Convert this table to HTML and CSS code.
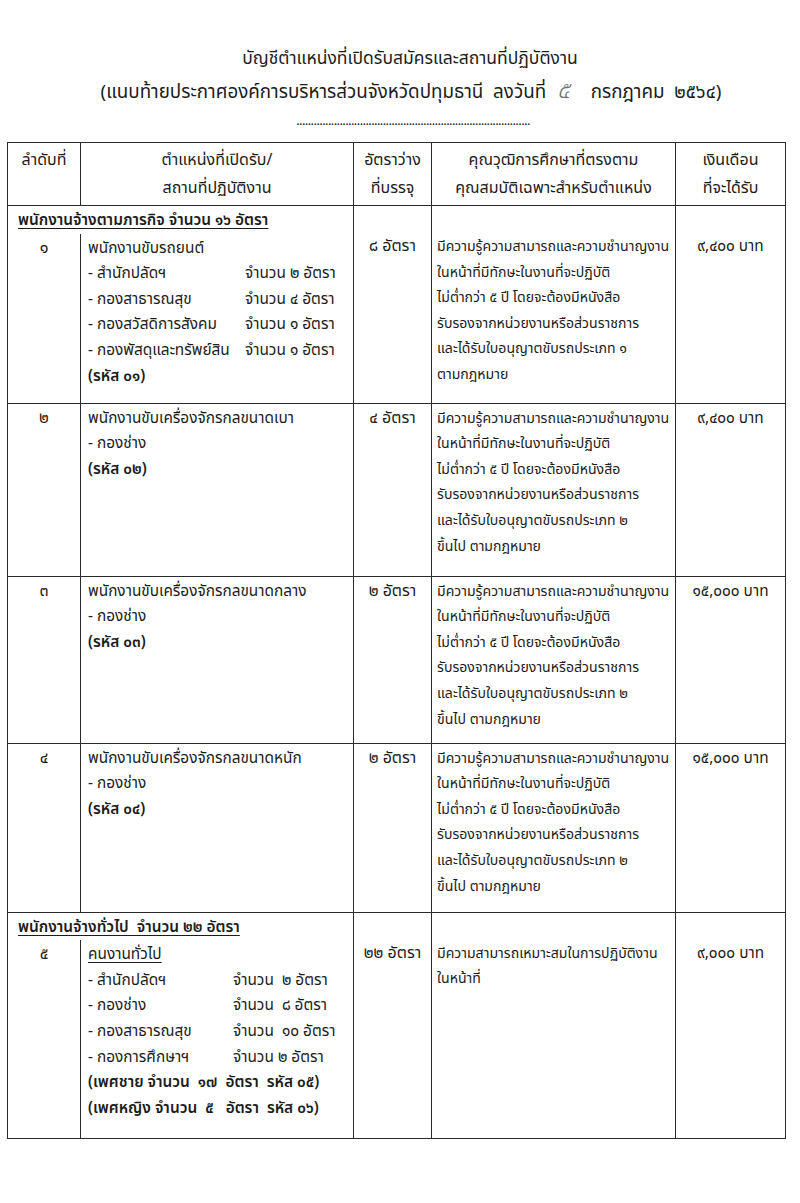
FILE: index.html
```html
<!DOCTYPE html>
<html lang="th">
<head>
<meta charset="utf-8">
<title>บัญชีตำแหน่งที่เปิดรับสมัคร</title>
<link rel="stylesheet" href="styles.css">
</head>
<body>
<div class="page">
  <div class="title">บัญชีตำแหน่งที่เปิดรับสมัครและสถานที่ปฏิบัติงาน</div>
  <div class="subtitle">(แนบท้ายประกาศองค์การบริหารส่วนจังหวัดปทุมธานี&nbsp; ลงวันที่ <span class="hand">๕</span>&nbsp;&nbsp; กรกฎาคม&nbsp; ๒๕๖๔)</div>
  <div class="dots">.................................................................................</div>

  <table class="tbl">
    <colgroup>
      <col class="w1"><col class="w2"><col class="w3"><col class="w4"><col class="w5">
    </colgroup>
    <tr class="head">
      <td class="ctr">ลำดับที่</td>
      <td class="ctr">ตำแหน่งที่เปิดรับ/<br>สถานที่ปฏิบัติงาน</td>
      <td class="ctr">อัตราว่าง<br>ที่บรรจุ</td>
      <td class="ctr">คุณวุฒิการศึกษาที่ตรงตาม<br>คุณสมบัติเฉพาะสำหรับตำแหน่ง</td>
      <td class="ctr">เงินเดือน<br>ที่จะได้รับ</td>
    </tr>

    <tr class="sec">
      <td colspan="2" class="sechead"><span class="ul">พนักงานจ้างตามภารกิจ จำนวน ๑๖ อัตรา</span></td>
      <td rowspan="2" class="ctr shift">๘ อัตรา</td>
      <td rowspan="2" class="qual shift">มีความรู้ความสามารถและความชำนาญงาน<br>ในหน้าที่มีทักษะในงานที่จะปฏิบัติ<br>ไม่ต่ำกว่า ๕ ปี โดยจะต้องมีหนังสือ<br>รับรองจากหน่วยงานหรือส่วนราชการ<br>และได้รับใบอนุญาตขับรถประเภท ๑<br>ตามกฎหมาย</td>
      <td rowspan="2" class="ctr shift sal">๙,๔๐๐ บาท</td>
    </tr>
    <tr class="r1">
      <td class="ctr nt">๑</td>
      <td class="pos nt">
        <div>พนักงานขับรถยนต์</div>
        <div class="items a">
          <span>- สำนักปลัดฯ</span><span>จำนวน ๒ อัตรา</span>
          <span>- กองสาธารณสุข</span><span>จำนวน ๔ อัตรา</span>
          <span>- กองสวัสดิการสังคม</span><span>จำนวน ๑ อัตรา</span>
          <span>- กองพัสดุและทรัพย์สิน</span><span>จำนวน ๑ อัตรา</span>
        </div>
        <div class="b">(รหัส ๐๑)</div>
      </td>
    </tr>

    <tr class="r2">
      <td class="ctr">๒</td>
      <td class="pos">
        <div>พนักงานขับเครื่องจักรกลขนาดเบา</div>
        <div>- กองช่าง</div>
        <div class="b">(รหัส ๐๒)</div>
      </td>
      <td class="ctr">๔ อัตรา</td>
      <td class="qual">มีความรู้ความสามารถและความชำนาญงาน<br>ในหน้าที่มีทักษะในงานที่จะปฏิบัติ<br>ไม่ต่ำกว่า ๕ ปี โดยจะต้องมีหนังสือ<br>รับรองจากหน่วยงานหรือส่วนราชการ<br>และได้รับใบอนุญาตขับรถประเภท ๒<br>ขึ้นไป ตามกฎหมาย</td>
      <td class="ctr sal">๙,๔๐๐ บาท</td>
    </tr>

    <tr class="r3">
      <td class="ctr">๓</td>
      <td class="pos">
        <div>พนักงานขับเครื่องจักรกลขนาดกลาง</div>
        <div>- กองช่าง</div>
        <div class="b">(รหัส ๐๓)</div>
      </td>
      <td class="ctr">๒ อัตรา</td>
      <td class="qual">มีความรู้ความสามารถและความชำนาญงาน<br>ในหน้าที่มีทักษะในงานที่จะปฏิบัติ<br>ไม่ต่ำกว่า ๕ ปี โดยจะต้องมีหนังสือ<br>รับรองจากหน่วยงานหรือส่วนราชการ<br>และได้รับใบอนุญาตขับรถประเภท ๒<br>ขึ้นไป ตามกฎหมาย</td>
      <td class="ctr sal">๑๕,๐๐๐ บาท</td>
    </tr>

    <tr class="r4">
      <td class="ctr">๔</td>
      <td class="pos">
        <div>พนักงานขับเครื่องจักรกลขนาดหนัก</div>
        <div>- กองช่าง</div>
        <div class="b">(รหัส ๐๔)</div>
      </td>
      <td class="ctr">๒ อัตรา</td>
      <td class="qual">มีความรู้ความสามารถและความชำนาญงาน<br>ในหน้าที่มีทักษะในงานที่จะปฏิบัติ<br>ไม่ต่ำกว่า ๕ ปี โดยจะต้องมีหนังสือ<br>รับรองจากหน่วยงานหรือส่วนราชการ<br>และได้รับใบอนุญาตขับรถประเภท ๒<br>ขึ้นไป ตามกฎหมาย</td>
      <td class="ctr sal">๑๕,๐๐๐ บาท</td>
    </tr>

    <tr class="sec">
      <td colspan="2" class="sechead"><span class="ul">พนักงานจ้างทั่วไป&nbsp; จำนวน ๒๒ อัตรา</span></td>
      <td rowspan="2" class="ctr shift">๒๒ อัตรา</td>
      <td rowspan="2" class="qual shift">มีความสามารถเหมาะสมในการปฏิบัติงาน<br>ในหน้าที่</td>
      <td rowspan="2" class="ctr shift sal">๙,๐๐๐ บาท</td>
    </tr>
    <tr class="r5">
      <td class="ctr nt">๕</td>
      <td class="pos nt">
        <div><span class="ul">คนงานทั่วไป</span></div>
        <div class="items c">
          <span>- สำนักปลัดฯ</span><span>จำนวน&nbsp; ๒ อัตรา</span>
          <span>- กองช่าง</span><span>จำนวน&nbsp; ๘ อัตรา</span>
          <span>- กองสาธารณสุข</span><span>จำนวน&nbsp; ๑๐ อัตรา</span>
          <span>- กองการศึกษาฯ</span><span>จำนวน ๒ อัตรา</span>
        </div>
        <div class="b">(เพศชาย จำนวน&nbsp; ๑๗&nbsp; อัตรา&nbsp; รหัส ๐๕)</div>
        <div class="b">(เพศหญิง จำนวน&nbsp; ๕&nbsp;&nbsp; อัตรา&nbsp; รหัส ๐๖)</div>
      </td>
    </tr>
  </table>
</div>
</body>
</html>
```

FILE: styles.css
```css
html, body {
  margin: 0;
  padding: 0;
  background: #ffffff;
}

body {
  font-family: "Noto Sans Thai", "Noto Sans Thai UI", "Loma", "Garuda", "DejaVu Sans", "Noto Sans", sans-serif;
  color: #1c1c1c;
  font-size: 16px;
}

.page {
  width: 800px;
  height: 1203px;
  padding-top: 44px;
  box-sizing: border-box;
}

.title {
  text-align: center;
  font-size: 17.5px;
  line-height: 30px;
  height: 30px;
  margin-left: 20px;
}

.subtitle {
  text-align: center;
  font-size: 18.8px;
  line-height: 34px;
  height: 34px;
  margin-left: 22px;
}

.hand {
  display: inline-block;
  font-style: italic;
  color: #707070;
  font-size: 24px;
  margin: 0 6px;
  font-weight: 300;
}

.dots {
  text-align: center;
  font-size: 13px;
  line-height: 14px;
  letter-spacing: -0.6px;
  margin-top: 6px;
  margin-bottom: 14px;
  margin-left: 26px;
  color: #222;
}

.tbl {
  border-collapse: collapse;
  table-layout: fixed;
  width: 778px;
  margin-left: 7px;
}

.w1 { width: 73px; }
.w2 { width: 273px; }
.w3 { width: 78px; }
.w4 { width: 244px; }
.w5 { width: 110px; }

.tbl td {
  border: 1.5px solid #2a2a2a;
  vertical-align: top;
  padding: 2px 0 0 0;
  line-height: 25.6px;
  font-size: 16px;
  white-space: nowrap;
}

.head td {
  line-height: 28px;
  padding-top: 3px;
  height: 59px;
}

.ctr { text-align: center; }

.tbl td.pos {
  padding-left: 7px;
  font-size: 15.4px;
}

.tbl td.qual {
  padding-left: 5px;
  font-size: 14.1px;
}

.tbl td.sal {
  font-weight: 400;
  font-size: 15.4px;
}

.sec td.sechead {
  border-bottom: none;
  padding-left: 10px;
  height: 24px;
  padding-top: 2px;
  font-size: 15.4px;
}

.tbl td.nt { border-top: none; }

.tbl td.shift { padding-top: 28px; }

.ul {
  text-decoration: underline;
  text-underline-offset: 3px;
}

.sechead .ul { font-weight: 600; }

.b { font-weight: 600; }

.items {
  display: grid;
}
.items.a { grid-template-columns: 157px auto; }
.items.c { grid-template-columns: 145px auto; }

.r1 td { height: 167px; }
.r2 td { height: 170px; }
.r3 td { height: 164px; }
.r4 td { height: 166px; }
.r5 td { height: 196px; }
```
